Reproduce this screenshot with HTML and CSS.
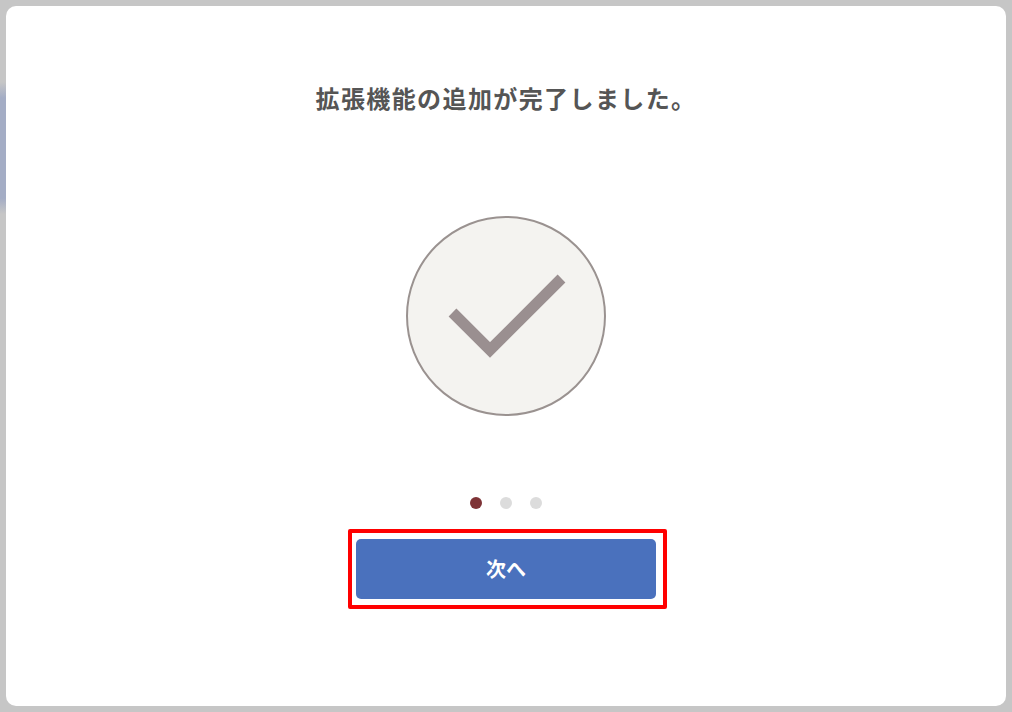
FILE: index.html
```html
<!DOCTYPE html>
<html lang="ja">
<head>
<meta charset="utf-8">
<title>拡張機能の追加が完了しました。</title>
<link rel="stylesheet" href="styles.css">
</head>
<body>
<div class="backdrop-glow"></div>
<main class="modal">
  <h1 class="title">拡張機能の追加が完了しました。</h1>
  <div class="badge">
    <svg class="badge-icon" viewBox="0 0 200 200" width="200" height="200" aria-hidden="true">
      <circle cx="100" cy="100" r="99" fill="#f4f3f0" stroke="#9a9290" stroke-width="2"/>
      <path d="M46.500 96.500 L84 134 L155.500 62.500" fill="none" stroke="#9a8f90" stroke-width="11"/>
    </svg>
  </div>
  <div class="dots">
    <span class="dot dot-active"></span>
    <span class="dot"></span>
    <span class="dot"></span>
  </div>
  <div class="action">
    <button class="next" type="button">次へ</button>
    <span class="highlight"></span>
  </div>
</main>
</body>
</html>
```
FILE: styles.css
```css
* { box-sizing: border-box; }
html, body { margin: 0; height: 100%; }
body {
  position: relative;
  padding: 6px;
  background: #c6c6c6;
  overflow: hidden;
  font-family: "Noto Sans CJK JP", "Noto Sans", sans-serif;
}
.backdrop-glow {
  position: absolute;
  left: 0;
  top: 82px;
  width: 6px;
  height: 132px;
  background: linear-gradient(#c6c6c6, #a4adc5 12%, #a4adc5 88%, #c6c6c6);
}
.modal {
  position: relative;
  width: 1000px;
  height: 700px;
  background: #fff;
  border-radius: 10px;
  display: flex;
  flex-direction: column;
  align-items: center;
  padding-top: 75px;
}
.title {
  margin: 0;
  font-size: 24px;
  line-height: 34px;
  font-weight: 700;
  letter-spacing: 1.4px;
  color: #555;
}
.badge { margin-top: 101px; height: 200px; }
.badge-icon { display: block; }
.dots { display: flex; gap: 18px; margin-top: 81px; }
.dot { width: 12px; height: 12px; border-radius: 50%; background: #dcdcdc; }
.dot-active { background: #7e3336; }
.action { position: relative; margin-top: 30px; }
.next {
  display: block;
  width: 300px;
  height: 60px;
  padding: 0 0 2px;
  border: 0;
  border-radius: 5px;
  background: #4a71bd;
  color: #fff;
  font: 700 20px "Noto Sans CJK JP", sans-serif;
}
.highlight {
  position: absolute;
  inset: -10px -11px -10px -8px;
  border: 4px solid #ff0000;
  border-radius: 2px;
  pointer-events: none;
}
```
